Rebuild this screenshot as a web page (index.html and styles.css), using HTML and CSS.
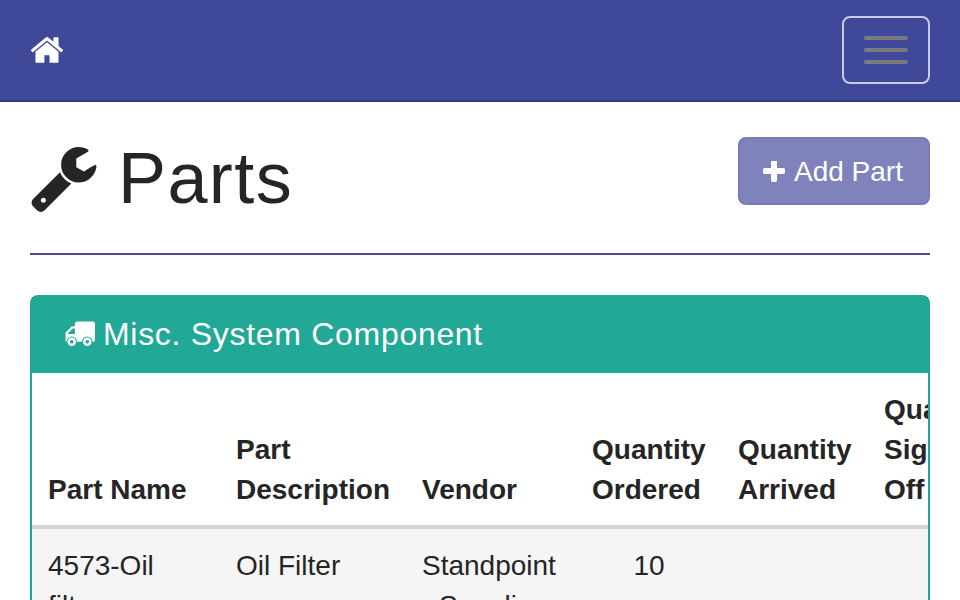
FILE: index.html
```html
<!DOCTYPE html>
<html lang="en">
<head>
<meta charset="utf-8">
<title>Parts</title>
<link rel="stylesheet" href="styles.css">
</head>
<body>
<nav class="navbar">
  <a class="brand" href="#" aria-label="Home">
    <svg class="icon-home" viewBox="97 256 1598 1280"><path d="M1472 992v480q0 26-19 45t-45 19h-384v-384h-256v384h-384q-26 0-45-19t-19-45v-480q0-1 .5-3t.5-3l575-474 575 474q1 2 1 6zm223-69l-62 74q-8 9-21 11h-3q-13 0-21-7l-692-577-692 577q-12 8-24 7-13-2-21-11l-62-74q-8-10-7-23.5t11-21.5l719-599q32-26 76-26t76 26l244 204v-195q0-14 9-23t23-9h192q14 0 23 9t9 23v408l219 182q10 8 11 21.5t-7 23.5z"/></svg>
  </a>
  <button class="toggle" type="button" aria-label="Menu">
    <span class="bar"></span><span class="bar"></span><span class="bar"></span>
  </button>
</nav>
<main class="container">
  <header class="page-header">
    <h1 class="title">
      <svg class="icon-wrench" viewBox="85 128 1641 1643"><path d="M448 1472q0-26-19-45t-45-19-45 19-19 45 19 45 45 19 45-19 19-45zm644-420l-682 682q-37 37-90 37-52 0-91-37l-106-108q-38-36-38-90 0-53 38-91l681-681q39 98 114.5 173.5t173.5 114.5zm634-435q0 39-23 106-47 134-164.5 217.5t-258.5 83.5q-185 0-316.5-131.5t-131.5-316.5 131.5-316.5 316.5-131.5q58 0 121.5 16.5t107.5 46.5q16 11 16 28t-16 28l-293 169v224l193 107q5-3 79-48.5t135.5-81 70.5-35.5q15 0 23.5 10t8.5 25z" fill-rule="evenodd"/></svg>
      <span>Parts</span>
    </h1>
    <a class="btn-add" href="#">
      <svg class="icon-plus" viewBox="192 192 1408 1408"><path d="M1600 736v192q0 40-28 68t-68 28h-416v416q0 40-28 68t-68 28h-192q-40 0-68-28t-28-68v-416h-416q-40 0-68-28t-28-68v-192q0-40 28-68t68-28h416v-416q0-40 28-68t68-28h192q40 0 68 28t28 68v416h416q40 0 68 28t28 68z"/></svg>
      <span class="btn-label">Add Part</span>
    </a>
  </header>
  <section class="panel">
    <div class="panel-heading">
      <svg class="icon-truck" viewBox="0 0 640 512">
        <path fill-rule="evenodd" d="M48 0h320c26.500 0 48 21.500 48 48v48h44.100c12.700 0 24.900 5.100 33.900 14.100l99.900 99.900c9 9 14.100 21.200 14.100 33.900V400c0 8.800-7.200 16-16 16H48c-26.500 0-48-21.500-48-48V48C0 21.500 21.500 0 48 0zm368 144v112h144v-12.100L460.100 144z"/>
        <circle class="wheel-gap" cx="160" cy="416" r="108"/>
        <circle class="wheel-gap" cx="480" cy="416" r="108"/>
        <circle class="wheel" cx="160" cy="416" r="88"/>
        <circle class="wheel" cx="480" cy="416" r="88"/>
        <circle class="wheel-gap" cx="160" cy="416" r="38"/>
        <circle class="wheel-gap" cx="480" cy="416" r="38"/>
      </svg>
      <span class="panel-title">Misc. System Component</span>
    </div>
    <div class="table-wrap">
      <table class="parts">
        <thead>
          <tr>
            <th class="col-name">Part Name</th>
            <th class="col-desc">Part Description</th>
            <th class="col-vendor">Vendor</th>
            <th class="col-qty">Quantity Ordered</th>
            <th class="col-qty">Quantity Arrived</th>
            <th class="col-qty">Quantity<br>Sign<br>Off</th>
          </tr>
        </thead>
        <tbody>
          <tr>
            <td>4573-Oil filter</td>
            <td>Oil Filter</td>
            <td>Standpoint - Supplies</td>
            <td class="num">10</td>
            <td class="num"></td>
            <td class="num"></td>
          </tr>
        </tbody>
      </table>
    </div>
  </section>
</main>
</body>
</html>
```
FILE: styles.css
```css
html, body {
  margin: 0;
  height: 600px;
  overflow: hidden;
}
body {
  background: #fff;
  color: #252525;
  font-family: "Liberation Sans", Arial, sans-serif;
  font-size: 28px;
  line-height: 40px;
}
svg { display: block; fill: currentColor; }

.navbar {
  box-sizing: border-box;
  height: 102px;
  display: flex;
  align-items: center;
  justify-content: space-between;
  padding: 0 30px;
  background: #40489a;
  border-bottom: 2px solid #363d80;
}
.brand { color: #fff; margin: 0 0 0 1px; }
.icon-home { width: 32px; height: 26px; }
.toggle {
  box-sizing: border-box;
  width: 88px;
  height: 68px;
  padding: 0;
  display: flex;
  flex-direction: column;
  align-items: center;
  justify-content: center;
  gap: 8px;
  background: transparent;
  border: 2px solid #cacce3;
  border-radius: 8px;
}
.bar { width: 44px; height: 4px; border-radius: 2px; background: #7b7b7f; }

.container { padding: 35px 30px 0; }
.page-header {
  display: flex;
  justify-content: space-between;
  align-items: flex-start;
  height: 116px;
  border-bottom: 2px solid #4a4f8e;
}
.title {
  margin: 2px 0 0;
  display: flex;
  align-items: center;
  gap: 21px;
  font-size: 72px;
  font-weight: 400;
  line-height: 79px;
  letter-spacing: 1.4px;
}
.icon-wrench { width: 66px; height: 65px; margin: 1px 0 0 1px; }
.btn-add {
  box-sizing: border-box;
  width: 192px;
  height: 68px;
  padding-right: 2px;
  display: flex;
  align-items: center;
  justify-content: center;
  gap: 9px;
  color: #fff;
  text-decoration: none;
  background: #7f82bb;
  border: 2px solid #787cb6;
  border-radius: 8px;
}
.btn-label { margin-top: 2px; }
.icon-plus { width: 22px; height: 22px; margin-top: 1px; }

.panel {
  margin-top: 40px;
  border: 2px solid #22a896;
  border-bottom: 0;
  border-radius: 8px 8px 0 0;
}
.panel-heading {
  display: flex;
  align-items: center;
  gap: 8px;
  height: 76px;
  padding: 0 32px;
  color: #fff;
  background: #22a896;
  font-size: 32px;
  letter-spacing: 0.7px;
}
.panel-title { margin-top: -2px; }
.icon-truck { width: 31px; height: 26px; margin-top: -2px; transform: scaleX(-1); }
.wheel-gap { fill: #22a896; }

.table-wrap { overflow: hidden; }
.parts {
  table-layout: fixed;
  width: 982px;
  border-collapse: collapse;
}
.parts th, .parts td {
  padding: 17px 16px 15px;
  text-align: left;
  vertical-align: top;
}
.parts th {
  vertical-align: bottom;
  border-bottom: 4px solid #d4d4d4;
}
.parts tbody tr { background: #f5f5f5; }
.parts td.num { text-align: center; }
.col-name { width: 156px; }
.col-desc { width: 154px; }
.col-vendor { width: 138px; }
.col-qty { width: 114px; }
```
